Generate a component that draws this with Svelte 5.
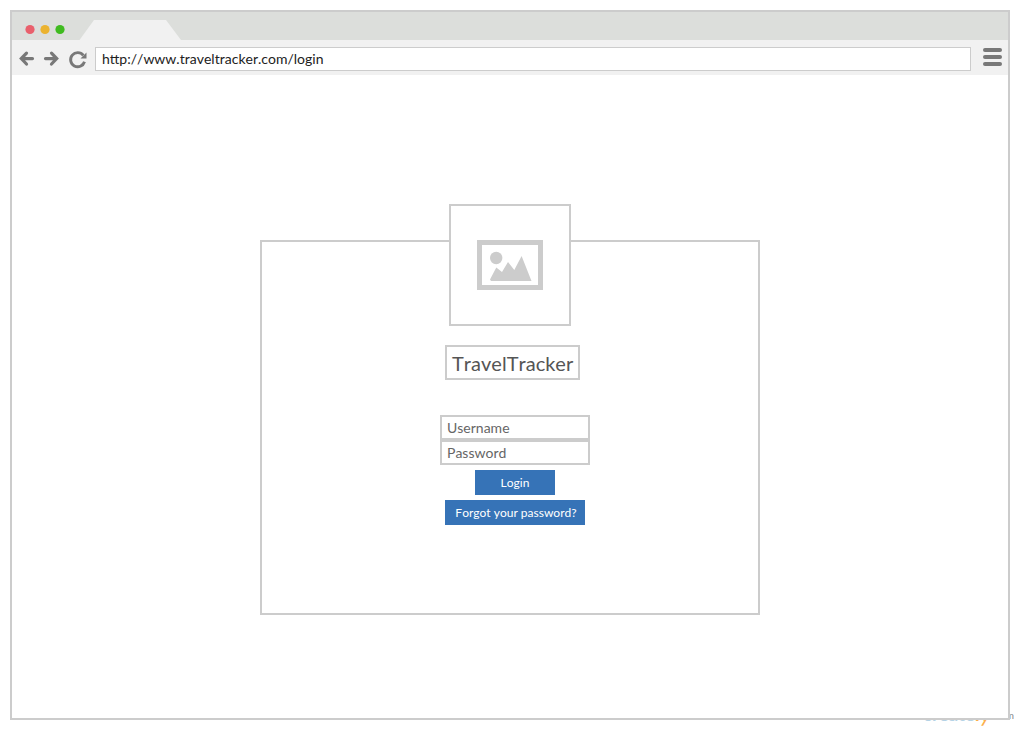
<script>
  const url = 'http://www.traveltracker.com/login';
  const fields = ['Username', 'Password'];
</script>

<div class="stage">
  <div class="brand" aria-hidden="true"><span class="blue">create</span><span class="orange">l<span class="tail">y</span></span><span class="com">.com</span></div>

  <div class="browser">
    <div class="tabs">
      <svg width="996" height="28" viewBox="12 12 996 28">
        <circle cx="30" cy="29.5" r="4.6" fill="#e9606c" />
        <circle cx="45" cy="29.5" r="4.6" fill="#ebb32f" />
        <circle cx="60" cy="29.5" r="4.6" fill="#3fbb1f" />
        <path d="M79.500 40L94 20H166L181 40Z" fill="#f1f1f1" />
      </svg>
    </div>

    <div class="toolbar">
      <svg class="nav" width="78" height="35" viewBox="12 40 78 35" fill="none" stroke="#787878" stroke-width="3">
        <path d="M26.500 53.200L21.300 58.600L26.500 64M21.500 58.600H32.500" stroke-width="3.200" stroke-linecap="round" />
        <path d="M51.500 53.200L56.700 58.600L51.500 64M56.500 58.600H45.500" stroke-width="3.200" stroke-linecap="round" />
        <path d="M83.300 55.300A7.100 7.100 0 1 0 84.500 61.800" stroke-width="2.900" />
        <path d="M86.500 52.600V58.500H80.500Z" fill="#787878" stroke="none" />
      </svg>
      <div class="address">{url}</div>
      <div class="menu"><i></i><i></i><i></i></div>
    </div>

    <div class="page">
      <div class="card">
        <div class="logo">
          <svg width="66" height="50" viewBox="0 0 66 50" fill="#ccc">
            <path d="M0 0H66V50H0ZM5 5V45H61V5Z" fill-rule="evenodd" />
            <circle cx="19.200" cy="18" r="6.200" />
            <path d="M13 39.500L19.300 27.500L25 32L31 22L37.300 30L44.600 16L54.500 41H14Z" />
          </svg>
        </div>
        <h1>TravelTracker</h1>
        <form>
          {#each fields as field}
            <div class="field">{field}</div>
          {/each}
          <button type="button" class="login">Login</button>
          <button type="button" class="forgot">Forgot your password?</button>
        </form>
      </div>
    </div>
  </div>
</div>

<style>
  :global(body) { margin: 0; background: #fff; }
  .stage {
    position: relative;
    width: 1020px;
    height: 730px;
    padding: 10px;
    box-sizing: border-box;
    overflow: hidden;
    font-family: Lato, sans-serif;
    font-kerning: none;
  }
  .brand {
    position: absolute;
    left: 923px;
    top: 700px;
    line-height: 26px;
    font-size: 20px;
    font-weight: 700;
    white-space: nowrap;
  }
  .blue { color: #b5d3e6; font-size: 18.500px; }
  .orange { color: #fbb04c; }
  .tail { display: inline-block; font-size: 22px; font-weight: 400; transform: translateY(1px) skewX(-8deg); }
  .com { color: #888; font-size: 10px; font-weight: 400; position: absolute; left: 70px; top: 2px; }
  .browser {
    position: relative;
    display: flex;
    flex-direction: column;
    width: 1000px;
    height: 710px;
    box-sizing: border-box;
    border: 2px solid #ccc;
    background: #fff;
  }
  .tabs { height: 28px; background: #dcdedb; }
  svg { display: block; }
  .toolbar { display: flex; height: 35px; background: #f1f1f1; }
  .address {
    width: 876px;
    height: 24px;
    margin: 7px 0 0 5px;
    padding-left: 6px;
    box-sizing: border-box;
    border: 1px solid #ccc;
    background: #fff;
    color: #222;
    font-size: 14px;
    line-height: 21px;
  }
  .menu { display: flex; flex-direction: column; gap: 3px; width: 19px; margin: 8px 0 0 12px; }
  .menu i { height: 4px; border-radius: 2px; background: #787878; }
  .page { flex: 1; display: flex; justify-content: center; align-items: flex-start; padding-top: 165px; }
  .card {
    display: flex;
    flex-direction: column;
    align-items: center;
    width: 500px;
    height: 375px;
    box-sizing: border-box;
    border: 2px solid #ccc;
  }
  .logo {
    display: flex;
    justify-content: center;
    align-items: center;
    width: 122px;
    height: 122px;
    margin-top: -38px;
    box-sizing: border-box;
    border: 2px solid #ccc;
    background: #fff;
  }
  h1 {
    width: 135px;
    height: 35px;
    margin: 19px 0 0 5px;
    padding-left: 5px;
    box-sizing: border-box;
    border: 2px solid #ccc;
    color: #555;
    font-size: 20px;
    font-weight: 400;
    line-height: 33px;
    white-space: nowrap;
  }
  form { display: flex; flex-direction: column; align-items: center; width: 150px; margin: 35px 0 0 10px; }
  .field {
    width: 150px;
    height: 25px;
    padding-left: 5px;
    box-sizing: border-box;
    border: 2px solid #ccc;
    color: #666;
    font-size: 14px;
    line-height: 22px;
  }
  button {
    height: 25px;
    margin: 5px 0 0;
    padding: 0;
    border: 0;
    background: #3673b7;
    color: #fff;
    font: 12px/25px Lato, sans-serif;
    font-kerning: none;
    white-space: nowrap;
  }
  .login { width: 80px; }
  .forgot { width: 140px; padding-left: 2px; }
</style>
